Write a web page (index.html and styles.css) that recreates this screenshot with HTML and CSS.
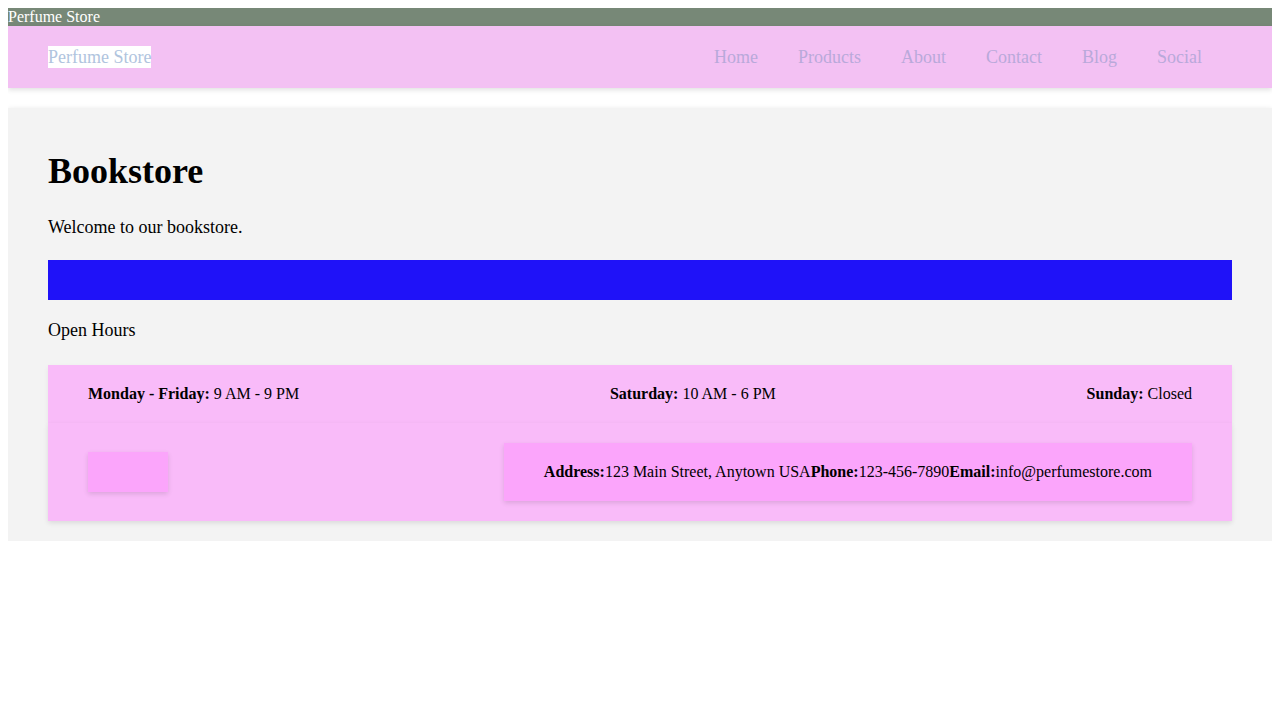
FILE: index.html
```html
<!DOCTYPE html>
<html>
<head>
<meta charset="utf-8">
<link rel="stylesheet" href="styles.css">
</head>
<body>
<div class="topbar">Perfume Store</div>
<header class="header">
  <div class="logo">Perfume Store</div>
  <nav class="nav">
    <a href="#">Home</a>
    <a href="#">Products</a>
    <a href="#">About</a>
    <a href="#">Contact</a>
    <a href="#">Blog</a>
    <a href="#">Social</a>
  </nav>
</header>
<main class="card">
  <h1 class="title">Bookstore</h1>
  <p class="welcome">Welcome to our bookstore.</p>
  <div class="banner"></div>
  <p class="hours-title">Open Hours</p>
  <div class="hours">
    <div><b>Monday - Friday:</b> 9 AM - 9 PM</div>
    <div><b>Saturday:</b> 10 AM - 6 PM</div>
    <div><b>Sunday:</b> Closed</div>
  </div>
  <footer class="footer">
    <div class="footer-logo"></div>
    <div class="contact"><b>Address:</b>123 Main Street, Anytown USA<b>Phone:</b>123-456-7890<b>Email:</b>info@perfumestore.com</div>
  </footer>
</main>
</body>
</html>
```
FILE: styles.css
```css
body {
  margin: 8px;
  font-family: "Liberation Serif", "Times New Roman", serif;
  font-size: 16px;
  color: #000;
  background: #fff;
}
.topbar {
  background: #778877;
  color: #fff;
  line-height: 18px;
  height: 18px;
}
.header {
  display: flex;
  justify-content: space-between;
  align-items: center;
  height: 62px;
  padding: 0 40px;
  background: #f3c1f3;
  box-shadow: 0 2px 5px rgba(0,0,0,0.12);
}
.logo {
  background: #fff;
  color: #b0c4de;
  font-size: 18px;
  line-height: 22px;
}
.nav {
  display: flex;
  padding-right: 10px;
}
.nav a {
  color: #b9a9da;
  text-decoration: none;
  font-size: 18px;
  padding: 0 20px;
}
.card {
  display: block;
  margin-top: 20px;
  padding: 40px 40px 20px;
  background: #f3f3f3;
  box-shadow: 0 2px 6px rgba(0,0,0,0.15);
}
.title {
  margin: 0;
  font-size: 36px;
  line-height: 46px;
  font-weight: bold;
}
.welcome {
  margin: 22px 0 22px;
  font-size: 18px;
  line-height: 22px;
}
.banner {
  height: 40px;
  background: #1f12f8;
}
.hours-title {
  margin: 19px 0 24px;
  font-size: 18px;
  line-height: 22px;
}
.hours {
  display: flex;
  justify-content: space-between;
  align-items: center;
  height: 58px;
  padding: 0 40px;
  background: #f9bbf9;
  box-shadow: 0 2px 5px rgba(0,0,0,0.06);
}
.footer {
  display: flex;
  justify-content: space-between;
  align-items: center;
  padding: 20px 40px;
  background: #f9bbf9;
  box-shadow: 0 2px 5px rgba(0,0,0,0.1);
}
.footer-logo {
  width: 80px;
  height: 40px;
  background: #fba5fb;
  box-shadow: 0 2px 5px rgba(0,0,0,0.12);
}
.contact {
  height: 58px;
  line-height: 58px;
  padding: 0 40px;
  background: #fba5fb;
  box-shadow: 0 2px 5px rgba(0,0,0,0.12);
}
```
